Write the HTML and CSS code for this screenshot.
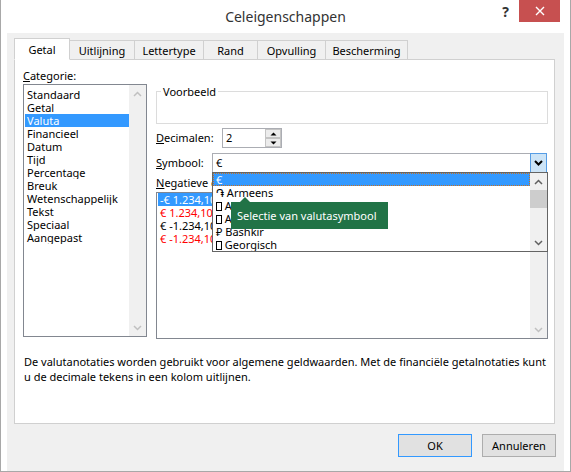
FILE: index.html
```html
<!DOCTYPE html>
<html lang="nl">
<head>
	<meta charset="UTF-8">
	<title>Celeigenschappen</title>
	<link rel="stylesheet" href="styles.css">
</head>
<body>
	<div class="venster">
		<div class="titelbalk">
			<span></span>
			<span class="titel">Celeigenschappen</span>
			<div class="titelknoppen">
				<span class="help">?</span>
				<span class="sluiten">
					<svg width="10" height="10" viewBox="0 0 10 10"><path d="M1 1L9 9M9 1L1 9" stroke="#fff" stroke-width="1.4"/></svg>
				</span>
			</div>
		</div>
		<div class="inhoud">
			<div class="tabs">
				<span class="tab actief">Getal</span>
				<span class="tab">Uitlijning</span>
				<span class="tab">Lettertype</span>
				<span class="tab">Rand</span>
				<span class="tab">Opvulling</span>
				<span class="tab">Bescherming</span>
			</div>
			<div class="paneel">
				<div class="kolommen">
					<div class="links">
						<div class="label"><u>C</u>ategorie:</div>
						<div class="lijst categorie">
							<ul>
								<li>Standaard</li>
								<li>Getal</li>
								<li class="gekozen">Valuta</li>
								<li>Financieel</li>
								<li>Datum</li>
								<li>Tijd</li>
								<li>Percentage</li>
								<li>Breuk</li>
								<li>Wetenschappelijk</li>
								<li>Tekst</li>
								<li>Speciaal</li>
								<li>Aangepast</li>
							</ul>
							<div class="schuifbalk">
								<span class="pijl uit"><svg width="9" height="6" viewBox="0 0 9 6"><path d="M1 5L4.5 1.5L8 5" fill="none" stroke="currentColor" stroke-width="1.5"/></svg></span>
								<span class="pijl uit onder"><svg width="9" height="6" viewBox="0 0 9 6"><path d="M1 1L4.5 4.5L8 1" fill="none" stroke="currentColor" stroke-width="1.5"/></svg></span>
							</div>
						</div>
					</div>
					<div class="rechts">
						<fieldset class="voorbeeld"><legend>Voorbeeld</legend></fieldset>
						<div class="rij">
							<span class="label decimalen"><u>D</u>ecimalen:</span>
							<div class="spin">
								<span class="waarde">2</span>
								<div class="spinknoppen">
									<span><svg width="7" height="4" viewBox="0 0 7 4"><path d="M0.5 3.5L3.5 0.5L6.5 3.5Z" fill="#000"/></svg></span>
									<span><svg width="7" height="4" viewBox="0 0 7 4"><path d="M0.5 0.5L3.5 3.5L6.5 0.5Z" fill="#000"/></svg></span>
								</div>
							</div>
						</div>
						<div class="rij symboolrij">
							<span class="label symbool"><u>S</u>ymbool:</span>
							<div class="combo">
								<span class="waarde">€</span>
								<span class="comboknop"><svg width="9" height="6" viewBox="0 0 9 6"><path d="M1 1L4.5 4.5L8 1" fill="none" stroke="#000" stroke-width="2"/></svg></span>
								<div class="uitklap">
									<ul>
										<li class="gekozen">€</li>
										<li>֏ Armeens</li>
										<li><span class="tofu"></span> Azerbeidzjaans (Cyrillisch)</li>
										<li><span class="tofu"></span> Azerbeidzjaans (Latijns)</li>
										<li>₽ Bashkir</li>
										<li><span class="tofu"></span> Georgisch</li>
									</ul>
									<div class="schuifbalk">
										<span class="pijl"><svg width="9" height="6" viewBox="0 0 9 6"><path d="M1 5L4.5 1.5L8 5" fill="none" stroke="currentColor" stroke-width="1.5"/></svg></span>
										<span class="duim"></span>
										<span class="pijl onder"><svg width="9" height="6" viewBox="0 0 9 6"><path d="M1 1L4.5 4.5L8 1" fill="none" stroke="currentColor" stroke-width="1.5"/></svg></span>
									</div>
									<div class="tip">Selectie van valutasymbool</div>
								</div>
							</div>
						</div>
						<div class="label negatieflabel"><u>N</u>egatieve getallen:</div>
						<div class="lijst negatief">
							<ul>
								<li class="gekozen">-€ 1.234,10</li>
								<li class="rood">€ 1.234,10</li>
								<li>€ -1.234,10</li>
								<li class="rood">€ -1.234,10</li>
							</ul>
							<div class="schuifbalk">
								<span class="pijl uit"><svg width="9" height="6" viewBox="0 0 9 6"><path d="M1 5L4.5 1.5L8 5" fill="none" stroke="currentColor" stroke-width="1.5"/></svg></span>
								<span class="pijl uit onder"><svg width="9" height="6" viewBox="0 0 9 6"><path d="M1 1L4.5 4.5L8 1" fill="none" stroke="currentColor" stroke-width="1.5"/></svg></span>
							</div>
						</div>
					</div>
				</div>
				<p class="uitleg">De valutanotaties worden gebruikt voor algemene geldwaarden. Met de financiële getalnotaties kunt<br>u de decimale tekens in een kolom uitlijnen.</p>
			</div>
			<div class="knoppen">
				<button class="standaard">OK</button>
				<button>Annuleren</button>
			</div>
		</div>
	</div>
</body>
</html>
```

FILE: styles.css
```css
*{
	box-sizing: border-box;
}
body{
	margin: 0;
	font-family: "Noto Sans", "DejaVu Sans", sans-serif;
	font-size: 11px;
	color: #000;
	background-color: #fff;
}
ul{
	list-style: none;
	margin: 0;
	padding: 0;
}
.venster{
	width: 571px;
	height: 472px;
	border: 1px solid #a8a8a8;
	border-top: none;
	padding: 0 6px;
	display: flex;
	flex-direction: column;
}

/* titelbalk */
.titelbalk{
	height: 33px;
	display: grid;
	grid-template-columns: 1fr auto 1fr;
	align-items: start;
}
.titel{
	font-size: 14px;
	line-height: 33px;
	color: #333;
}
.titelknoppen{
	justify-self: end;
	display: flex;
	align-items: flex-start;
}
.help{
	font-size: 14px;
	font-weight: bold;
	line-height: 24px;
	color: #333;
	margin-right: 10px;
}
.sluiten{
	width: 41px;
	height: 22px;
	margin-right: 4px;
	background-color: #c75050;
	display: flex;
	align-items: center;
	justify-content: center;
}

/* inhoud */
.inhoud{
	flex: 1;
	background-color: #f0f0f0;
	padding: 5px 9px 0 7px;
	display: flex;
	flex-direction: column;
}
.tabs{
	height: 22px;
	display: flex;
	align-items: flex-end;
	margin-bottom: -1px;
	position: relative;
	z-index: 1;
}
.tab{
	height: 20px;
	border: 1px solid #d0d0d0;
	background-color: #f0f0f0;
	margin-left: -1px;
	padding-top: 1px;
	line-height: 17px;
	text-align: center;
}
.tab:first-child{
	margin-left: 0;
}
.tab.actief{
	height: 22px;
	background-color: #fff;
	border-bottom-color: #fff;
	line-height: 19px;
	position: relative;
	z-index: 1;
}
.tab:nth-child(1){ width: 56px; }
.tab:nth-child(2){ width: 66px; }
.tab:nth-child(3){ width: 70px; }
.tab:nth-child(4){ width: 55px; }
.tab:nth-child(5){ width: 69px; }
.tab:nth-child(6){ width: 83px; }

.paneel{
	height: 365px;
	background-color: #fff;
	border: 1px solid #d0d0d0;
	padding: 8px 0 0 8px;
}
.kolommen{
	display: flex;
	align-items: flex-start;
	gap: 9px;
}
.links{
	width: 124px;
}
.label{
	display: block;
	line-height: 16px;
}
.rechts{
	width: 392px;
	padding-top: 16px;
}

/* lijsten */
.lijst{
	display: flex;
	border: 1px solid #828790;
	background-color: #fff;
}
.lijst ul{
	flex: 1;
	padding-left: 1px;
}
.lijst li{
	height: 13px;
	line-height: 13px;
	padding-left: 2px;
	white-space: nowrap;
	overflow: hidden;
}
.categorie{
	height: 253px;
}
.categorie ul{
	padding-top: 3px;
}
.gekozen{
	background-color: #3399ff;
	color: #fff;
}
.rood{
	color: #ff0000;
}
.schuifbalk{
	width: 17px;
	background-color: #f0f0f0;
	display: flex;
	flex-direction: column;
}
.pijl{
	height: 17px;
	display: flex;
	align-items: center;
	justify-content: center;
	color: #606060;
}
.pijl.uit{
	color: #c0c0c0;
}
.pijl.onder{
	margin-top: auto;
}
.duim{
	height: 18px;
	background-color: #cdcdcd;
}

/* voorbeeld en invoer */
.voorbeeld{
	margin: 0;
	padding: 0 4px;
	height: 40px;
	border: 1px solid #dcdcdc;
}
.voorbeeld legend{
	padding: 0 2px;
	line-height: 15px;
}
.rij{
	display: flex;
	align-items: center;
	margin-top: 4px;
}
.decimalen{
	width: 66px;
}
.symbool{
	width: 56px;
}
.spin{
	width: 60px;
	height: 20px;
	border: 1px solid #abadb3;
	background-color: #fff;
	display: flex;
}
.waarde{
	flex: 1;
	padding-left: 3px;
	line-height: 18px;
}
.spinknoppen{
	width: 16px;
	display: flex;
	flex-direction: column;
}
.spinknoppen span{
	flex: 1;
	border: 1px solid #c4c4c4;
	background-color: #ececec;
	display: flex;
	align-items: center;
	justify-content: center;
}
.symboolrij{
	margin-top: 5px;
	position: relative;
	z-index: 2;
}
.combo{
	width: 335px;
	height: 20px;
	border: 1px solid #abadb3;
	background-color: #fff;
	display: flex;
	position: relative;
}
.comboknop{
	width: 17px;
	margin: -1px -1px -1px 0;
	border: 1px solid #569de5;
	background-color: #cce4f7;
	display: flex;
	align-items: center;
	justify-content: center;
}

/* open keuzelijst met tip */
.uitklap{
	position: absolute;
	left: -1px;
	top: 18px;
	width: 336px;
	height: 80px;
	border: 1px solid #646464;
	background-color: #fff;
	display: flex;
}
.uitklap ul{
	flex: 1;
}
.uitklap li{
	height: 13px;
	line-height: 13px;
	padding-left: 3px;
	white-space: nowrap;
	overflow: hidden;
}
.uitklap li.gekozen{
	outline: 1px dotted #c87020;
	outline-offset: -1px;
}
.tofu{
	display: inline-block;
	width: 6px;
	height: 9px;
	border: 1px solid #000;
	vertical-align: -1px;
}
.tip{
	position: absolute;
	left: 18px;
	top: 29px;
	height: 27px;
	line-height: 27px;
	padding: 0 12px 0 6px;
	background-color: #217346;
	color: #fff;
	white-space: nowrap;
}
.tip::before{
	content: "";
	position: absolute;
	left: 9px;
	top: -5px;
	border-left: 5px solid transparent;
	border-right: 5px solid transparent;
	border-bottom: 5px solid #217346;
}
.negatieflabel{
	margin-top: 2px;
	line-height: 15px;
}
.negatief{
	margin-top: 2px;
	height: 147px;
}

.uitleg{
	margin: 15px 0 0 1px;
	line-height: 15px;
	white-space: nowrap;
}

/* knoppen */
.knoppen{
	display: flex;
	justify-content: flex-end;
	gap: 10px;
	margin-top: 10px;
	margin-right: -1px;
}
button{
	width: 74px;
	height: 23px;
	padding: 0;
	border: 1px solid #adadad;
	background-color: #e1e1e1;
	font-family: inherit;
	font-size: 11px;
	color: #000;
}
button.standaard{
	border-color: #3399ff;
}
```
